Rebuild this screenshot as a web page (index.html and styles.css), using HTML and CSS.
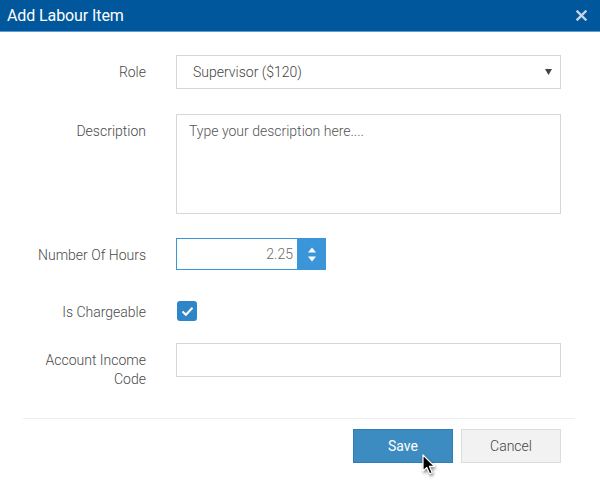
FILE: index.html
```html
<!DOCTYPE html>
<html lang="en">
<head>
<meta charset="utf-8">
<title>Add Labour Item</title>
<link rel="stylesheet" href="styles.css">
</head>
<body>
<div class="dialog">
  <header class="dialog-header">
    <h1 class="dialog-title">Add Labour Item</h1>
    <span class="dialog-close">
      <svg width="11" height="11" viewBox="0 0 11 11"><path d="M1.5 1.5 L9.5 9.5 M9.5 1.5 L1.5 9.5" stroke="#c5d5e6" stroke-width="2.4" stroke-linecap="square"/></svg>
    </span>
  </header>
  <form class="dialog-body">
    <div class="row row-role">
      <label class="label">Role</label>
      <div class="field select">
        <span class="select-text">Supervisor ($120)</span>
        <svg class="select-arrow" width="7" height="6" viewBox="0 0 7 6"><path d="M0 0 H7 L3.5 6 Z" fill="#444"/></svg>
      </div>
    </div>
    <div class="row row-desc">
      <label class="label">Description</label>
      <textarea class="field textarea" placeholder="Type your description here...."></textarea>
    </div>
    <div class="row row-hours">
      <label class="label">Number Of Hours</label>
      <div class="number">
        <input class="number-input" type="text" value="2.25">
        <span class="spinner">
          <svg width="10" height="17" viewBox="0 0 10 17"><path d="M1 6.5 L5 1.5 L9 6.5 Z M1 10.5 L5 15.5 L9 10.5 Z" fill="#fff"/></svg>
        </span>
      </div>
    </div>
    <div class="row row-check">
      <label class="label">Is Chargeable</label>
      <div class="check-wrap">
        <span class="checkbox">
          <svg width="13" height="11" viewBox="0 0 13 11"><path d="M1.5 5.6 L4.9 8.8 L11.5 1.8" fill="none" stroke="#fff" stroke-width="2"/></svg>
        </span>
      </div>
    </div>
    <div class="row row-account">
      <label class="label">Account Income<br>Code</label>
      <input class="field text" type="text">
    </div>
  </form>
  <div class="dialog-footer">
    <button class="btn btn-save" type="button">Save
      <svg class="cursor" width="14" height="22" viewBox="0 0 14 22"><path d="M1 1 L1 17 L4.8 13.4 L7.6 19.8 L10.2 18.7 L7.5 12.4 L12.5 12.4 Z" fill="#000" stroke="#fff" stroke-width="1.2" stroke-linejoin="round"/></svg>
    </button>
    <button class="btn btn-cancel" type="button">Cancel</button>
  </div>
</div>
</body>
</html>
```
FILE: styles.css
```css
* { box-sizing: border-box; }

html, body {
  margin: 0;
  padding: 0;
  background: #fff;
}

body {
  font-family: Roboto, "Liberation Sans", Arial, sans-serif;
  color: #555;
}

.dialog {
  width: 600px;
  height: 481px;
  background: #fff;
}

.dialog-header {
  height: 32px;
  background: #01579b;
  border-bottom: 1px solid #5c9bd6;
  display: flex;
  align-items: center;
  justify-content: space-between;
  padding: 0 13px 1px 7px;
}

.dialog-title {
  margin: 0;
  font-size: 16px;
  font-weight: 400;
  color: #fff;
  letter-spacing: -0.1px;
}

.dialog-close {
  display: flex;
  width: 11px;
  height: 11px;
  margin-top: 1px;
}

.dialog-body {
  margin: 0;
  padding-top: 23px;
}

.row {
  display: flex;
  align-items: flex-start;
}

.label {
  width: 146px;
  margin-right: 30px;
  text-align: right;
  font-size: 14px;
  font-weight: 300;
  line-height: 19px;
  padding-top: 8px;
  color: #4a4a4a;
  flex: none;
}

.field {
  width: 385px;
  border: 1px solid #d3d7dd;
  background: #fff;
  font-family: inherit;
  font-size: 14px;
  font-weight: 300;
  color: #444;
  margin: 0;
  outline: none;
}

.row-role { margin-bottom: 25px; }
.row-desc { margin-bottom: 24px; }
.row-hours { margin-bottom: 25px; }
.row-check { margin-bottom: 14px; }

.select {
  height: 34px;
  display: flex;
  align-items: center;
  justify-content: space-between;
  padding: 0 8px 0 16px;
}

.select-text {
  font-size: 14px;
}

.select-arrow { margin-top: -1px; }

.textarea {
  height: 100px;
  padding: 7px 12px;
  resize: none;
  line-height: 19px;
  display: block;
}

.textarea::placeholder {
  color: #555;
  opacity: 1;
}

.number {
  display: flex;
  height: 32px;
}

.number-input {
  width: 121px;
  height: 32px;
  border: 1px solid #3a96d8;
  border-right: none;
  font-family: inherit;
  font-size: 14px;
  font-weight: 300;
  color: #6a6a6a;
  text-align: right;
  padding: 0 4px 0 8px;
  margin: 0;
  outline: none;
}

.spinner {
  width: 29px;
  height: 32px;
  background: #3a96d8;
  display: flex;
  align-items: center;
  justify-content: center;
}

.check-wrap {
  height: 34px;
  display: flex;
  align-items: center;
  padding-left: 1px;
  padding-bottom: 2px;
}

.checkbox {
  width: 20px;
  height: 20px;
  border-radius: 3px;
  background: #2e86c8;
  display: flex;
  align-items: center;
  justify-content: center;
}

.text {
  height: 34px;
  padding: 0 12px;
}

.dialog-footer {
  margin: 29px 25px 0 23px;
  border-top: 1px solid #eeeeee;
  padding: 10px 14px 0 0;
  display: flex;
  justify-content: flex-end;
  gap: 8px;
}

.btn {
  width: 100px;
  height: 34px;
  font-family: inherit;
  font-size: 14px;
  border-radius: 0;
  margin: 0;
  padding: 0;
  cursor: default;
}

.btn-save {
  position: relative;
  background: #3c8cc1;
  border: 1px solid #2f7db2;
  color: #fff;
}

.btn-cancel {
  background: #f2f2f2;
  border: 1px solid #dcdcdc;
  color: #444;
  font-weight: 300;
}

.cursor {
  position: absolute;
  left: 68px;
  top: 24px;
  filter: drop-shadow(1px 2px 1.5px rgba(0,0,0,0.45));
}
```
